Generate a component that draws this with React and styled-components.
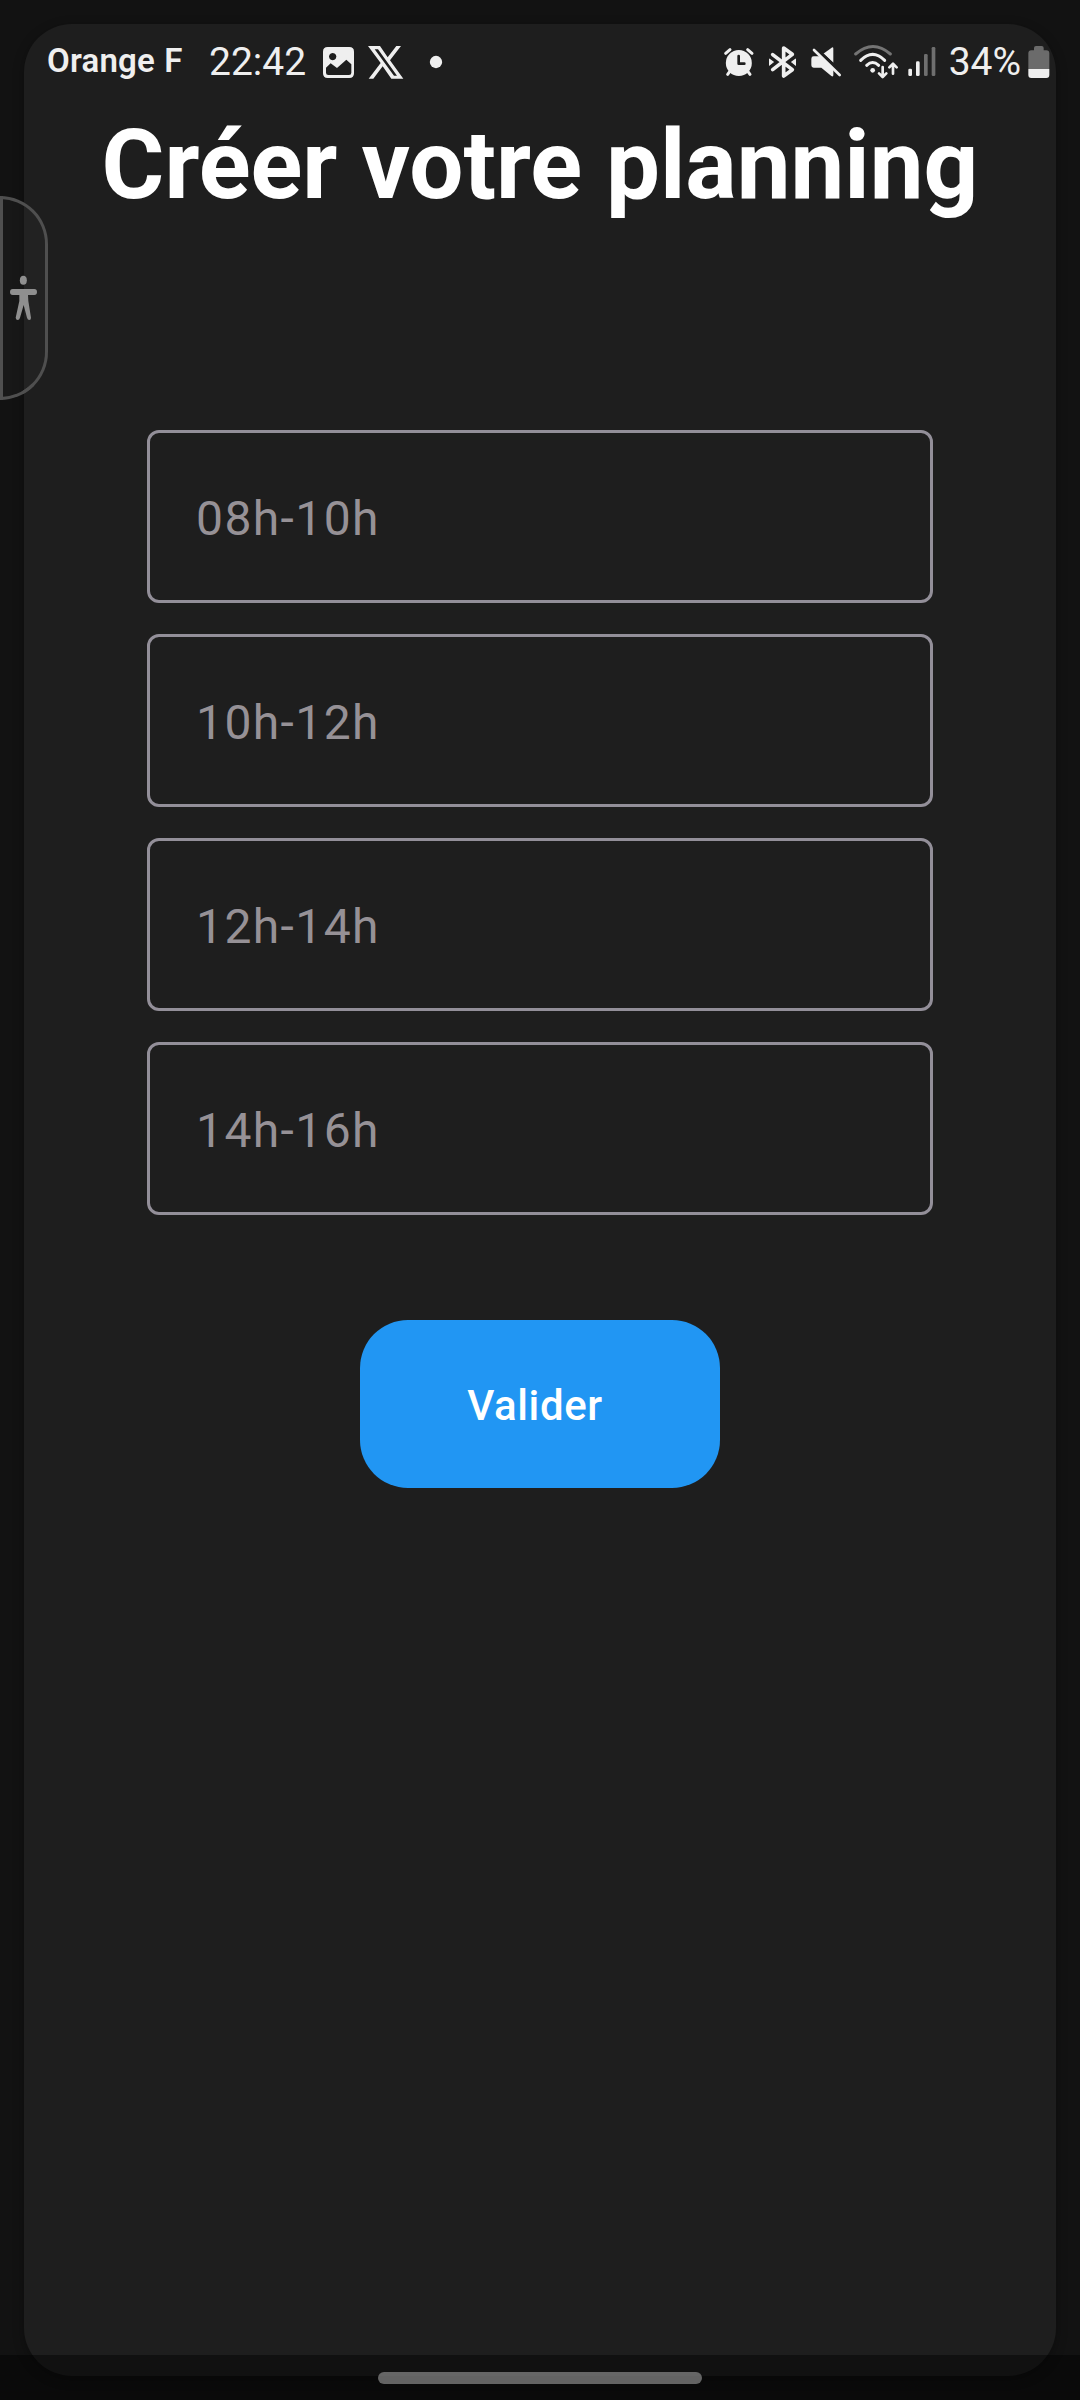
import React from 'react';
import styled, { createGlobalStyle } from 'styled-components';

const GlobalStyle = createGlobalStyle`
  *, *::before, *::after { box-sizing: border-box; }
  html, body { margin: 0; padding: 0; background: #121212; }
  body { font-family: Roboto, "Liberation Sans", sans-serif; }
`;

const Screen = styled.div`
  position: relative;
  width: 1080px;
  height: 2400px;
  padding: 24px;
  overflow: hidden;
  background: #121212;
`;

const Card = styled.main`
  display: flex;
  flex-direction: column;
  align-items: center;
  height: 100%;
  padding-top: 16px;
  border-radius: 48px;
  background: #1e1e1e;
  box-shadow: 0 3px 12px rgba(0, 0, 0, 0.3);
`;

const StatusBar = styled.header`
  display: flex;
  justify-content: space-between;
  width: 100%;
  height: 44px;
  padding: 0 5.33px 0 23px;
  color: #efefef;
`;

const StatusGroup = styled.div`
  display: flex;
  align-items: flex-start;
`;

const Carrier = styled.span`
  width: 162px;
  height: 44px;
  font-size: 33px;
  font-weight: 600;
  line-height: 41px;
  letter-spacing: 0.2px;
  word-spacing: 1px;
  white-space: nowrap;
`;

const StatusText = styled.span`
  width: ${({ $width }) => $width}px;
  margin-left: ${({ $gap = 0 }) => $gap}px;
  font-size: 39px;
  line-height: 45px;
  white-space: nowrap;
`;

const Glyph = styled.svg`
  display: block;
  flex: none;
  width: ${({ $width }) => $width}px;
  height: 44px;
  margin-left: ${({ $gap = 0 }) => $gap}px;
`;

const Title = styled.h1`
  margin: 25px 0 0;
  color: #fff;
  font-size: 96px;
  font-weight: 700;
  line-height: 112px;
  white-space: nowrap;
`;

const Form = styled.section`
  display: flex;
  flex-direction: column;
  align-items: center;
  margin-top: 209px;
`;

const Fields = styled.div`
  display: flex;
  flex-direction: column;
  gap: 31px;
`;

const Field = styled.div`
  display: flex;
  align-items: center;
  width: 786px;
  height: 173px;
  padding: 4px 46px 0;
  border: 3px solid #938f99;
  border-radius: 12px;
  color: #969196;
  font-size: 48px;
  line-height: 56px;
  letter-spacing: 1.4px;
`;

const Submit = styled.button`
  width: 360px;
  height: 168px;
  margin-top: 105px;
  padding: 3px 10px 0 0;
  border: 0;
  border-radius: 48px;
  background: #2196f3;
  color: #fff;
  font: 500 42px/50px Roboto, "Liberation Sans", sans-serif;
  letter-spacing: 0.6px;
`;

const EdgeHandle = styled.aside`
  position: absolute;
  top: 196px;
  left: 0;
  width: 48px;
  height: 204px;
  border: 3px solid #4f4f4f;
  border-radius: 0 48px 48px 0;
  background: rgba(80, 80, 80, 0.1);
`;

const Person = styled.svg`
  display: block;
  width: 42px;
  height: 198px;
`;

const NavBar = styled.nav`
  position: absolute;
  left: 0;
  right: 0;
  bottom: 0;
  display: flex;
  justify-content: center;
  height: 45px;
  padding-top: 17px;
  background: rgba(0, 0, 0, 0.42);
`;

const NavPill = styled.div`
  width: 324px;
  height: 12px;
  border-radius: 6px;
  background: rgba(160, 160, 160, 0.6);
`;

const slots = ['08h-10h', '10h-12h', '12h-14h', '14h-16h'];

function PictureIcon() {
  return (
    <Glyph $width={38} $gap={14} viewBox="960 120 114 132" fill="#efefef">
      <path
        fillRule="evenodd"
        d="M983 141h65q14 0 14 14v65q0 14-14 14h-65q-14 0-14-14v-65q0-14 14-14z
           M998 159a11 11 0 1 0 .1 0z
           M978 203l14-13 19 14 28-25 15 14v25q0 7-7 7h-62q-7 0-7-7z"
      />
    </Glyph>
  );
}

function XIcon() {
  return (
    <Glyph $width={42} $gap={7} viewBox="1095 120 126 132" fill="#efefef">
      <path
        fillRule="evenodd"
        d="M1104 138h36l23 34 26-34h14l-33 43 40 55h-36l-26-37-28 37h-14l36-47z
           M1124 148l58 79h9l-57-79z"
      />
    </Glyph>
  );
}

function DotIcon() {
  return (
    <Glyph $width={16} $gap={21} viewBox="1284 120 48 132" fill="#efefef">
      <circle cx="1308" cy="186" r="18.5" />
    </Glyph>
  );
}

function AlarmIcon() {
  return (
    <Glyph $width={32} viewBox="68 120 96 132" fill="none" stroke="#efefef" strokeLinecap="round">
      <path d="M76 160l13-11M155 160l-13-11" strokeWidth="9" />
      <path d="M88 215l-6 8M143 215l6 8" strokeWidth="9" />
      <circle cx="115.5" cy="189" r="39" fill="#efefef" stroke="none" />
      <path d="M115 168v23h17" stroke="#1e1e1e" strokeWidth="8" strokeLinejoin="round" />
    </Glyph>
  );
}

function BluetoothIcon() {
  return (
    <Glyph $width={32} $gap={10} viewBox="194 120 96 132" fill="none" stroke="#efefef">
      <path
        d="M217 164l59 45-26 19v-84l26 19-59 46"
        strokeWidth="11"
        strokeLinecap="round"
        strokeLinejoin="round"
      />
      <path d="M208 179l10 7-10 8zM285 179l-10 7 10 8z" fill="#efefef" strokeWidth="4" />
    </Glyph>
  );
}

function MuteIcon() {
  return (
    <Glyph $width={34} $gap={12} viewBox="326 120 102 132" fill="#efefef">
      <path d="M394 143q5-3 5 3v42l-30-27z" />
      <path d="M340 169h22l37 36v20q0 7-6 3l-30-25h-23q-7 0-7-7v-20q0-7 7-7z" />
      <path d="M350 147l76 73" stroke="#1e1e1e" strokeWidth="8" />
      <path d="M341 150l77 75" stroke="#efefef" strokeWidth="8" strokeLinecap="round" />
    </Glyph>
  );
}

function WifiIcon() {
  return (
    <Glyph $width={46} $gap={10.67} viewBox="460 120 138 132" fill="none" strokeLinecap="round">
      <path d="M468 162q52-45 104 0" stroke="#747474" strokeWidth="9" />
      <path d="M483 181q36-36 72 0" stroke="#efefef" strokeWidth="9" />
      <path d="M501 196q18-17 36 0" stroke="#efefef" strokeWidth="9" />
      <circle cx="519" cy="211" r="7" fill="#efefef" />
      <path
        d="M549 201v29M538 220l11 11 11-11M580 221v-29M569 202l11-11 11 11"
        stroke="#efefef"
        strokeWidth="8"
        strokeLinejoin="round"
      />
    </Glyph>
  );
}

function SignalIcon() {
  return (
    <Glyph $width={30} $gap={7.33} viewBox="620 120 90 132" fill="#efefef">
      <rect x="624" y="206" width="11" height="22" rx="4" />
      <rect x="647" y="184" width="11" height="44" rx="4" />
      <rect x="671" y="162" width="11" height="66" rx="4" fill="#6f6f6f" />
      <rect x="694" y="141" width="11" height="87" rx="4" fill="#6f6f6f" />
    </Glyph>
  );
}

function BatteryIcon() {
  return (
    <Glyph $width={24} $gap={3} viewBox="980 120 72 132" fill="#6b6b6b">
      <path d="M984 207v-47q0-9 9-9h8v-7q0-6 6-6h17q6 0 6 6v7h8q9 0 9 9v47z" />
      <path d="M984 207h63v18q0 9-9 9h-45q-9 0-9-9z" fill="#efefef" />
    </Glyph>
  );
}

export default function App() {
  return (
    <>
      <GlobalStyle />
      <Screen>
        <Card>
          <StatusBar>
            <StatusGroup>
              <Carrier>Orange F</Carrier>
              <StatusText $width={97}>22:42</StatusText>
              <PictureIcon />
              <XIcon />
              <DotIcon />
            </StatusGroup>
            <StatusGroup>
              <AlarmIcon />
              <BluetoothIcon />
              <MuteIcon />
              <WifiIcon />
              <SignalIcon />
              <StatusText $width={75} $gap={12}>34%</StatusText>
              <BatteryIcon />
            </StatusGroup>
          </StatusBar>
          <Title>Créer votre planning</Title>
          <Form>
            <Fields>
              {slots.map((slot) => (
                <Field key={slot}>{slot}</Field>
              ))}
            </Fields>
            <Submit>Valider</Submit>
          </Form>
        </Card>
        <EdgeHandle>
          <Person viewBox="9 87 126 594" fill="#8f8f8f">
            <ellipse cx="70" cy="331" rx="10.5" ry="13.5" />
            <path d="M38 357h65q8 0 8 9t-8 9H84l1 18 8 50q0 7-5 7t-7-7l-10-38-11 38q-2 7-7 7t-6-7l11-50v-18H38q-8 0-8-9t8-9z" />
          </Person>
        </EdgeHandle>
        <NavBar>
          <NavPill />
        </NavBar>
      </Screen>
    </>
  );
}
